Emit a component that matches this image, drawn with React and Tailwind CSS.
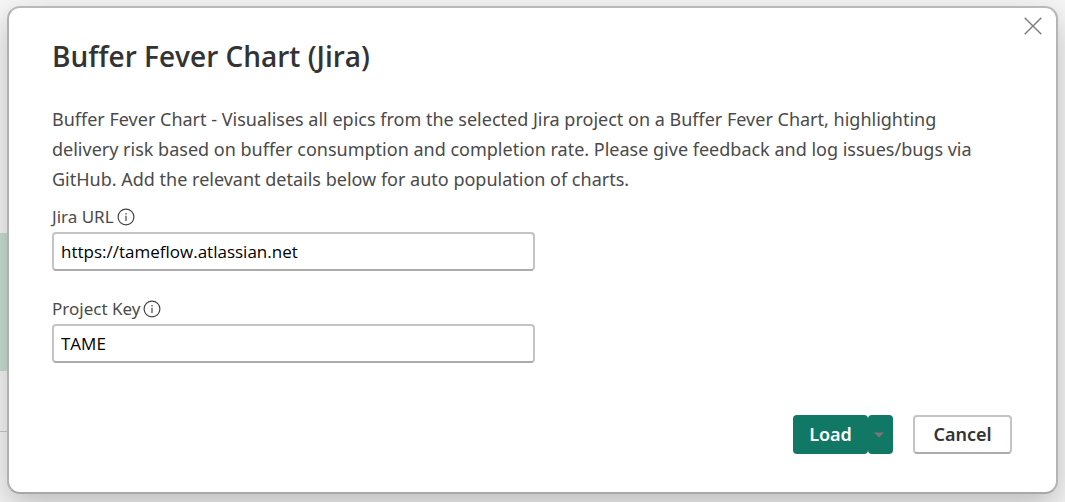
import { useId } from "react";

function InfoIcon() {
  return (
    <svg width="18" height="18" viewBox="0 0 18 18" fill="none" stroke="#444" strokeWidth="1.2" aria-hidden="true">
      <circle cx="9" cy="9" r="7.9" />
      <path d="M9 7.8V13" />
      <path d="M9 5V6.4" />
    </svg>
  );
}

function Field({ label, value }) {
  const id = useId();
  return (
    <div className="w-[483px] max-w-full">
      <div className="flex items-center gap-[3px] text-[17px] leading-6 text-[#4a4a4a]">
        <label htmlFor={id}>{label}</label>
        <InfoIcon />
      </div>
      <input
        id={id}
        type="text"
        defaultValue={value}
        className="mt-[3px] block h-[39px] w-full rounded border-2 border-[#c4c4c4] border-b-[#acacac] bg-white px-[7px] font-['Open_Sans',sans-serif] text-[17px] text-black outline-none"
      />
    </div>
  );
}

export default function App() {
  return (
    <div className="relative flex min-h-screen flex-col overflow-hidden bg-[#f6f6f6] px-[7px] pt-[6px] pb-2 font-['Noto_Sans',sans-serif]">
      <div className="absolute top-0 left-0 h-[432px] w-6 border-b border-[#c8c8c8]" />
      <div className="absolute top-[233px] left-0 h-[138px] w-6 bg-[#c9e0d2]" />
      <main
        role="dialog"
        aria-labelledby="title"
        className="relative flex flex-1 flex-col rounded-[13px] border-2 border-t-[#b9b9b9] border-r-[#b4b4b4] border-b-[#a8a8a8] border-l-[#b0b0b0] bg-white px-11 pt-[30px] pb-[38px] pl-[43px] shadow-[0_12px_32px_rgba(0,0,0,0.24)]"
      >
        <button type="button" aria-label="Close" className="absolute top-[9px] right-[14px]">
          <svg width="18" height="18" viewBox="0 0 18 18" stroke="#7c7c7c" strokeWidth="1.4" fill="none">
            <path d="M.7.7 17.3 17.3M17.3.7.7 17.3" />
          </svg>
        </button>
        <h1 id="title" className="font-['Open_Sans',sans-serif] text-[28px] leading-9 font-semibold text-[#333]">
          Buffer Fever Chart (Jira)
        </h1>
        <p className="mt-[30px] max-w-[940px] text-[18px] leading-[30px] text-[#4a4a4a]">
          Buffer Fever Chart - Visualises all epics from the selected Jira project on a Buffer Fever Chart, highlighting
          delivery risk based on buffer consumption and completion rate. Please give feedback and log issues/bugs via
          GitHub. Add the relevant details below for auto population of charts.
        </p>
        <form className="mt-[11px] flex flex-col gap-[26px]">
          <Field label="Jira URL" value="https://tameflow.atlassian.net" />
          <Field label="Project Key" value="TAME" />
        </form>
        <div className="mt-auto flex justify-end gap-5 text-[18px] font-semibold">
          <div className="flex">
            <button type="button" className="h-[39px] w-[75px] rounded bg-[#117865] text-white">
              Load
            </button>
            <button
              type="button"
              aria-label="More load options"
              className="flex h-[39px] w-[25px] items-center justify-center rounded bg-[#117865] pr-1"
            >
              <svg width="10" height="6" viewBox="0 0 10 6" fill="#777" aria-hidden="true">
                <path d="M0 .5h10L5 5.5z" />
              </svg>
            </button>
          </div>
          <button
            type="button"
            className="h-[39px] w-[99px] rounded border-2 border-[#c4c4c4] border-b-[#acacac] bg-white text-[#333]"
          >
            Cancel
          </button>
        </div>
      </main>
    </div>
  );
}
